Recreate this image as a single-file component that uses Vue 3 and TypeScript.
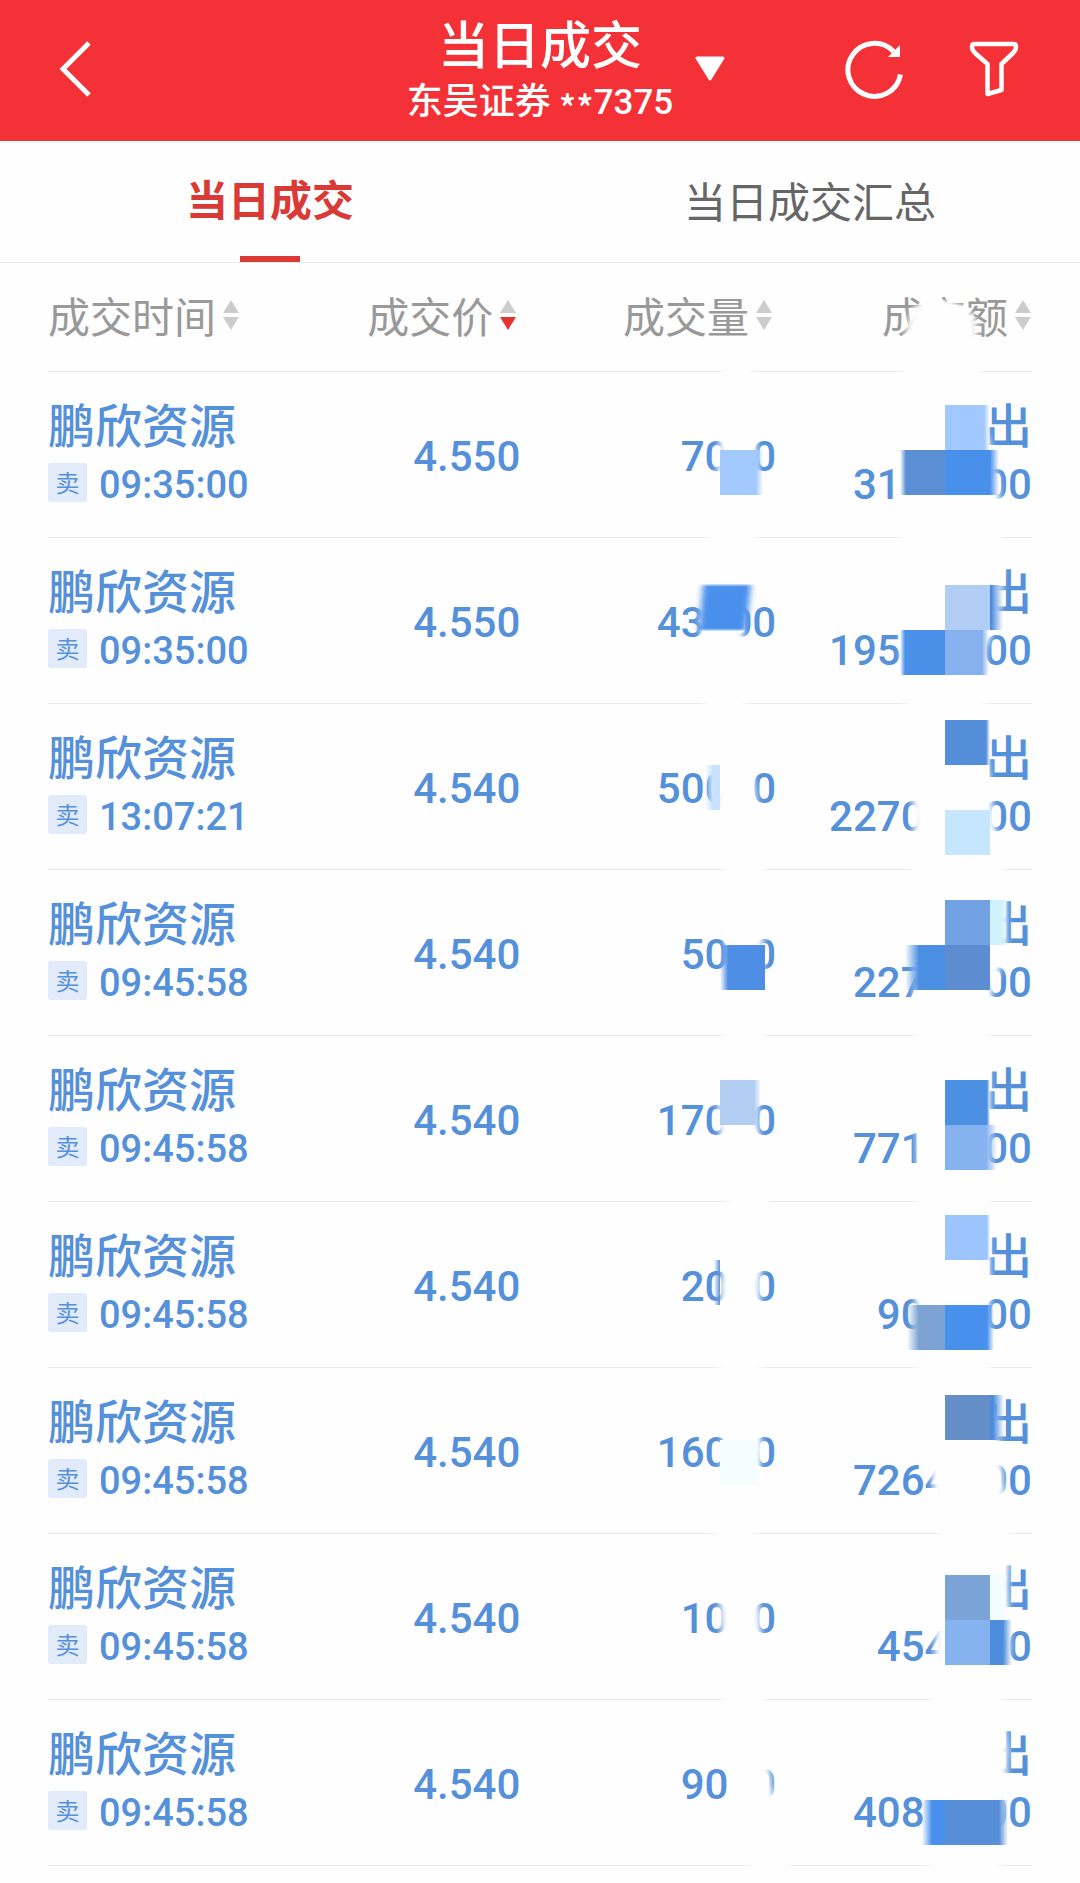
<script setup lang="ts">
import { ref } from 'vue'

interface Trade {
  time: string
  price: string
  volume: [string, string]
  amount: [string, string]
  hidden: number
}

interface Block {
  x: number
  y: number
  w: number
  color: string
  left?: number
  right?: number
}

const tabs = ['当日成交', '当日成交汇总']
const activeTab = ref(0)

const columns = ['成交时间', '成交价', '成交量', '成交额']
const sorted = ref(1)

// Volume and amount keep only their readable ends; "hidden" counts the masked digits between them.
const trades: Trade[] = [
  { time: '09:35:00', price: '4.550', volume: ['70', '0'], amount: ['31', '00'], hidden: 3 },
  { time: '09:35:00', price: '4.550', volume: ['43', '00'], amount: ['195', '00'], hidden: 3 },
  { time: '13:07:21', price: '4.540', volume: ['500', '0'], amount: ['2270', '00'], hidden: 2 },
  { time: '09:45:58', price: '4.540', volume: ['50', '0'], amount: ['227', '00'], hidden: 2 },
  { time: '09:45:58', price: '4.540', volume: ['170', '0'], amount: ['771', '00'], hidden: 2 },
  { time: '09:45:58', price: '4.540', volume: ['20', '0'], amount: ['90', '00'], hidden: 2 },
  { time: '09:45:58', price: '4.540', volume: ['160', '0'], amount: ['7264', '00'], hidden: 1 },
  { time: '09:45:58', price: '4.540', volume: ['10', '0'], amount: ['454', '00'], hidden: 1 },
  { time: '09:45:58', price: '4.540', volume: ['90', '0'], amount: ['408', '00'], hidden: 2 },
]

const SIZE = 45

// Mosaic tiles of the privacy brush, with the width of a soft edge on either side.
const blocks: Block[] = [
  { x: 720, y: 450, w: 43, color: '#a3caff', right: 7 },
  { x: 705, y: 765, w: 15, color: '#c8e1ff', left: 8 },
  { x: 720, y: 945, w: 45, color: '#4e8fe5', left: 8 },
  { x: 720, y: 1080, w: 41, color: '#b1cdf2', right: 7 },
  { x: 714, y: 1260, w: 6, color: '#5a90d6', left: 6 },
  { x: 720, y: 1440, w: 41, color: '#f4feff', right: 6 },
  { x: 945, y: 405, w: 45, color: '#a1c8ff', right: 6 },
  { x: 900, y: 450, w: 45, color: '#5a8fd6', left: 6 },
  { x: 945, y: 450, w: 54, color: '#4890ea', right: 9 },
  { x: 945, y: 585, w: 45, color: '#b2cef7' },
  { x: 990, y: 585, w: 13, color: '#4a88dc', right: 12 },
  { x: 900, y: 630, w: 45, color: '#4a90e8', left: 5 },
  { x: 945, y: 630, w: 44, color: '#86b1ee', right: 7 },
  { x: 945, y: 720, w: 45, color: '#558ed8', right: 4 },
  { x: 945, y: 810, w: 45, color: '#c6e5ff' },
  { x: 945, y: 900, w: 45, color: '#72a2e3' },
  { x: 990, y: 900, w: 18, color: '#d0f2ff', right: 6 },
  { x: 905, y: 945, w: 40, color: '#4b8fe2', left: 14 },
  { x: 945, y: 945, w: 45, color: '#5d8dd0' },
  { x: 945, y: 1080, w: 45, color: '#4c90e3', right: 3 },
  { x: 945, y: 1125, w: 52, color: '#87b2f0', right: 11 },
  { x: 945, y: 1215, w: 45, color: '#9dc5fd', right: 3 },
  { x: 907, y: 1305, w: 38, color: '#7ba2d3', left: 12 },
  { x: 945, y: 1305, w: 49, color: '#4790ec', right: 7 },
  { x: 945, y: 1395, w: 45, color: '#648ec8' },
  { x: 990, y: 1395, w: 14, color: '#4b8cde', right: 11 },
  { x: 945, y: 1575, w: 45, color: '#7ba3d7' },
  { x: 990, y: 1575, w: 18, color: '#f3fdff', right: 6 },
  { x: 945, y: 1620, w: 45, color: '#86b2f0' },
  { x: 990, y: 1620, w: 22, color: '#4d8ddd', right: 9 },
  { x: 922, y: 1800, w: 23, color: '#4890ec', left: 10 },
  { x: 945, y: 1800, w: 63, color: '#568ed8', right: 9 },
]
</script>

<template>
  <div class="page">
    <header class="bar">
      <button class="icon-button back" type="button" aria-label="返回">
        <svg width="36" height="60" viewBox="0 0 36 60">
          <path d="M33 4 7 30 33 56" fill="none" stroke="#fff" stroke-width="5" />
        </svg>
      </button>
      <div class="heading">
        <h1>当日成交</h1>
        <p>东吴证券 <span class="stars">**</span><span class="account">7375</span></p>
        <button class="icon-button caret" type="button" aria-label="切换账户">
          <svg width="30" height="26" viewBox="0 0 30 26">
            <path d="M2 2H28L15 23Z" fill="#fff" stroke="#fff" stroke-width="3" stroke-linejoin="round" />
          </svg>
        </button>
      </div>
      <div class="actions">
        <button class="icon-button" type="button" aria-label="刷新">
          <svg width="60" height="60" viewBox="0 0 60 60">
            <path d="M48.500 12.500A26.500 26.500 0 1 0 55.500 35.500" fill="none" stroke="#fff" stroke-width="5" />
            <path d="M55 6V18H43Z" fill="#fff" />
          </svg>
        </button>
        <button class="icon-button" type="button" aria-label="筛选">
          <svg width="52" height="60" viewBox="0 0 52 60">
            <path
              d="M5 5H45Q47 5 47 8Q47 11 44 14L32.500 25V51L18.500 55V25L6 14Q3 11 3 8Q3 5 5 5Z"
              fill="none"
              stroke="#fff"
              stroke-width="4.500"
              stroke-linejoin="round"
            />
          </svg>
        </button>
      </div>
    </header>

    <nav class="tabs">
      <button
        v-for="(tab, i) in tabs"
        :key="tab"
        type="button"
        class="tab"
        :class="{ active: i === activeTab }"
        @click="activeTab = i"
      >
        {{ tab }}
      </button>
    </nav>

    <main class="list">
      <table>
        <colgroup>
          <col class="col-time" />
          <col class="col-price" />
          <col class="col-volume" />
          <col class="col-amount" />
        </colgroup>
        <thead>
          <tr>
            <th v-for="(column, i) in columns" :key="column" scope="col">
              <button type="button" class="sort" @click="sorted = i">
                {{ column }}
                <svg width="16" height="32" viewBox="0 0 16 32">
                  <path d="M8 1 16 14H0Z" fill="#ccc" />
                  <path d="M0 18H16L8 31Z" :fill="i === sorted ? '#e23430' : '#ccc'" />
                </svg>
              </button>
            </th>
          </tr>
        </thead>
        <tbody>
          <tr v-for="(trade, i) in trades" :key="i">
            <td>
              <div class="name">鹏欣资源</div>
              <div class="when"><span class="badge">卖</span><time>{{ trade.time }}</time></div>
            </td>
            <td class="number">{{ trade.price }}</td>
            <td class="number">{{ trade.volume[0] }}<span class="gap" />{{ trade.volume[1] }}</td>
            <td class="number">
              <div class="name">出</div>
              <div class="sum">
                {{ trade.amount[0] }}<span class="gap point" :style="{ width: trade.hidden + 'ch' }" />{{ trade.amount[1] }}
              </div>
            </td>
          </tr>
        </tbody>
      </table>

      <svg class="mask" width="480" height="1620" viewBox="600 263 480 1620" aria-hidden="true">
        <defs>
          <filter id="soft" x="-20%" y="-2%" width="140%" height="104%">
            <feGaussianBlur stdDeviation="3 1" />
          </filter>
          <linearGradient v-for="(b, i) in blocks" :id="'tile' + i" :key="i">
            <stop offset="0" :stop-color="b.color" :stop-opacity="b.left ? 0 : 1" />
            <stop :offset="(b.left ?? 0) / b.w" :stop-color="b.color" />
            <stop :offset="1 - (b.right ?? 0) / b.w" :stop-color="b.color" />
            <stop offset="1" :stop-color="b.color" :stop-opacity="b.right ? 0 : 1" />
          </linearGradient>
        </defs>
        <g fill="#fefefe" filter="url(#soft)">
          <path
            d="M722 365 719 455 710 537 700 620 704 703 715 789 722 869 726 950 722 1035 718 1118 728 1201 721 1285 719 1367 723 1451 713 1533 721 1617 723 1699 734 1783 750 1865 752 1883H794L790 1865 771 1783 764 1699 760 1617 754 1533 761 1451 761 1367 760 1285 768 1201 757 1118 764 1035 763 950 764 869 755 789 745 703 743 620 755 537 757 455 752 365Z"
          />
          <path
            d="M935 298 912 308 906 330 903 371 898 480 902 537 901 650 905 703 914 820 912 869 914 985 915 1035 917 1148 918 1201 915 1315 915 1367 932 1480 938 1533 935 1650 932 1699 928 1815 930 1883H1000L1000 1865 1005 1815 1008 1750 1003 1699 1010 1650 1008 1585 1010 1533 1003 1480 998 1420 990 1367 990 1315 990 1201 990 1148 990 1090 990 1035 990 1000 1006 950 1006 900 1003 869 994 820 988 760 985 703 986 650 1000 610 1004 560 1003 537 998 480 987 430 980 371 976 320 965 306Z"
          />
        </g>
        <path d="M703 585H751L746 630H699Z" fill="#4a90ec" filter="url(#soft)" />
        <rect v-for="(b, i) in blocks" :key="i" :x="b.x" :y="b.y" :width="b.w" :height="SIZE" :fill="`url(#tile${i})`" />
      </svg>
    </main>
  </div>
</template>

<style>
body {
  margin: 0;
  background: #fefefe;
}
</style>

<style scoped>
.page {
  font-family: 'Noto Sans CJK SC', 'Noto Sans', sans-serif;
  background: #fefefe;
  overflow: hidden;
}

button {
  border: 0;
  padding: 0;
  background: none;
  font: inherit;
  color: inherit;
  cursor: pointer;
}

svg {
  display: block;
}

.bar {
  height: 138px;
  padding: 0 56px 3px;
  display: grid;
  grid-template-columns: 1fr auto 1fr;
  align-items: center;
  background: #f33136;
  color: #fff;
}

.back {
  justify-self: start;
}

.heading {
  position: relative;
  padding-top: 6px;
  text-align: center;
  font-weight: 500;
}

.heading h1 {
  margin: 0;
  font-size: 51px;
  line-height: 56px;
  font-weight: 500;
}

.heading p {
  margin: 0;
  font-size: 36px;
  line-height: 56px;
  white-space: nowrap;
}

.stars {
  vertical-align: sub;
  line-height: 1;
}

.account {
  font-family: Roboto, sans-serif;
  font-size: 35px;
}

.caret {
  position: absolute;
  left: 100%;
  top: 50%;
  margin: -13px 0 0 22px;
}

.actions {
  justify-self: end;
  display: flex;
  align-items: center;
  gap: 64px;
  margin-right: 3px;
}

.tabs {
  display: flex;
  height: 121px;
  border-bottom: 1px solid #ebebeb;
}

.tab {
  flex: 1;
  position: relative;
  padding-bottom: 4px;
  font-size: 42px;
  color: #666;
}

.tab.active {
  padding-bottom: 8px;
  font-weight: 700;
  color: #d93a36;
}

.tab.active::after {
  content: '';
  position: absolute;
  left: 50%;
  bottom: 0;
  width: 60px;
  margin-left: -30px;
  height: 6px;
  background: #d93a36;
}

.list {
  position: relative;
  padding: 0 48px 17px;
}

table {
  width: 100%;
  table-layout: fixed;
  border-collapse: separate;
  border-spacing: 0;
}

.col-time {
  width: 22%;
}

.col-price {
  width: 26%;
}

.col-volume,
.col-amount {
  width: 26%;
}

th,
td {
  padding: 0;
  border-bottom: 1px solid #ebebeb;
  white-space: nowrap;
  text-align: right;
}

th:first-child,
td:first-child {
  text-align: left;
}

th {
  height: 104px;
  padding: 0 4px 4px 0;
  font-weight: 400;
}

th:last-child {
  padding-right: 1px;
}

.sort {
  display: inline-flex;
  align-items: center;
  gap: 7px;
  font-size: 42px;
  line-height: 56px;
  color: #999;
}

td {
  height: 161px;
  padding-top: 4px;
  color: #5590da;
  font-weight: 500;
}

.name {
  font-family: 'Noto Sans CJK SC', sans-serif;
  font-size: 47px;
  line-height: 56px;
  padding-bottom: 8px;
}

td:first-child,
td:last-child {
  height: 157px;
  padding: 0 0 8px;
}

.when {
  display: flex;
  align-items: center;
  gap: 12px;
  height: 48px;
}

.badge {
  flex: none;
  width: 39px;
  height: 39px;
  border-radius: 3px;
  background: #e2ebfa;
  font-size: 24px;
  line-height: 38px;
  font-weight: 400;
  text-align: center;
}

time {
  font-family: Roboto, sans-serif;
  font-size: 38px;
  height: 48px;
  line-height: 52px;
}

.number {
  font-family: Roboto, sans-serif;
  font-size: 42px;
}

.sum {
  height: 48px;
  line-height: 52px;
}

.gap {
  display: inline-block;
  width: 1ch;
}

.gap.point {
  padding-right: 12px;
}

.mask {
  position: absolute;
  top: 0;
  right: 0;
  pointer-events: none;
}
</style>
